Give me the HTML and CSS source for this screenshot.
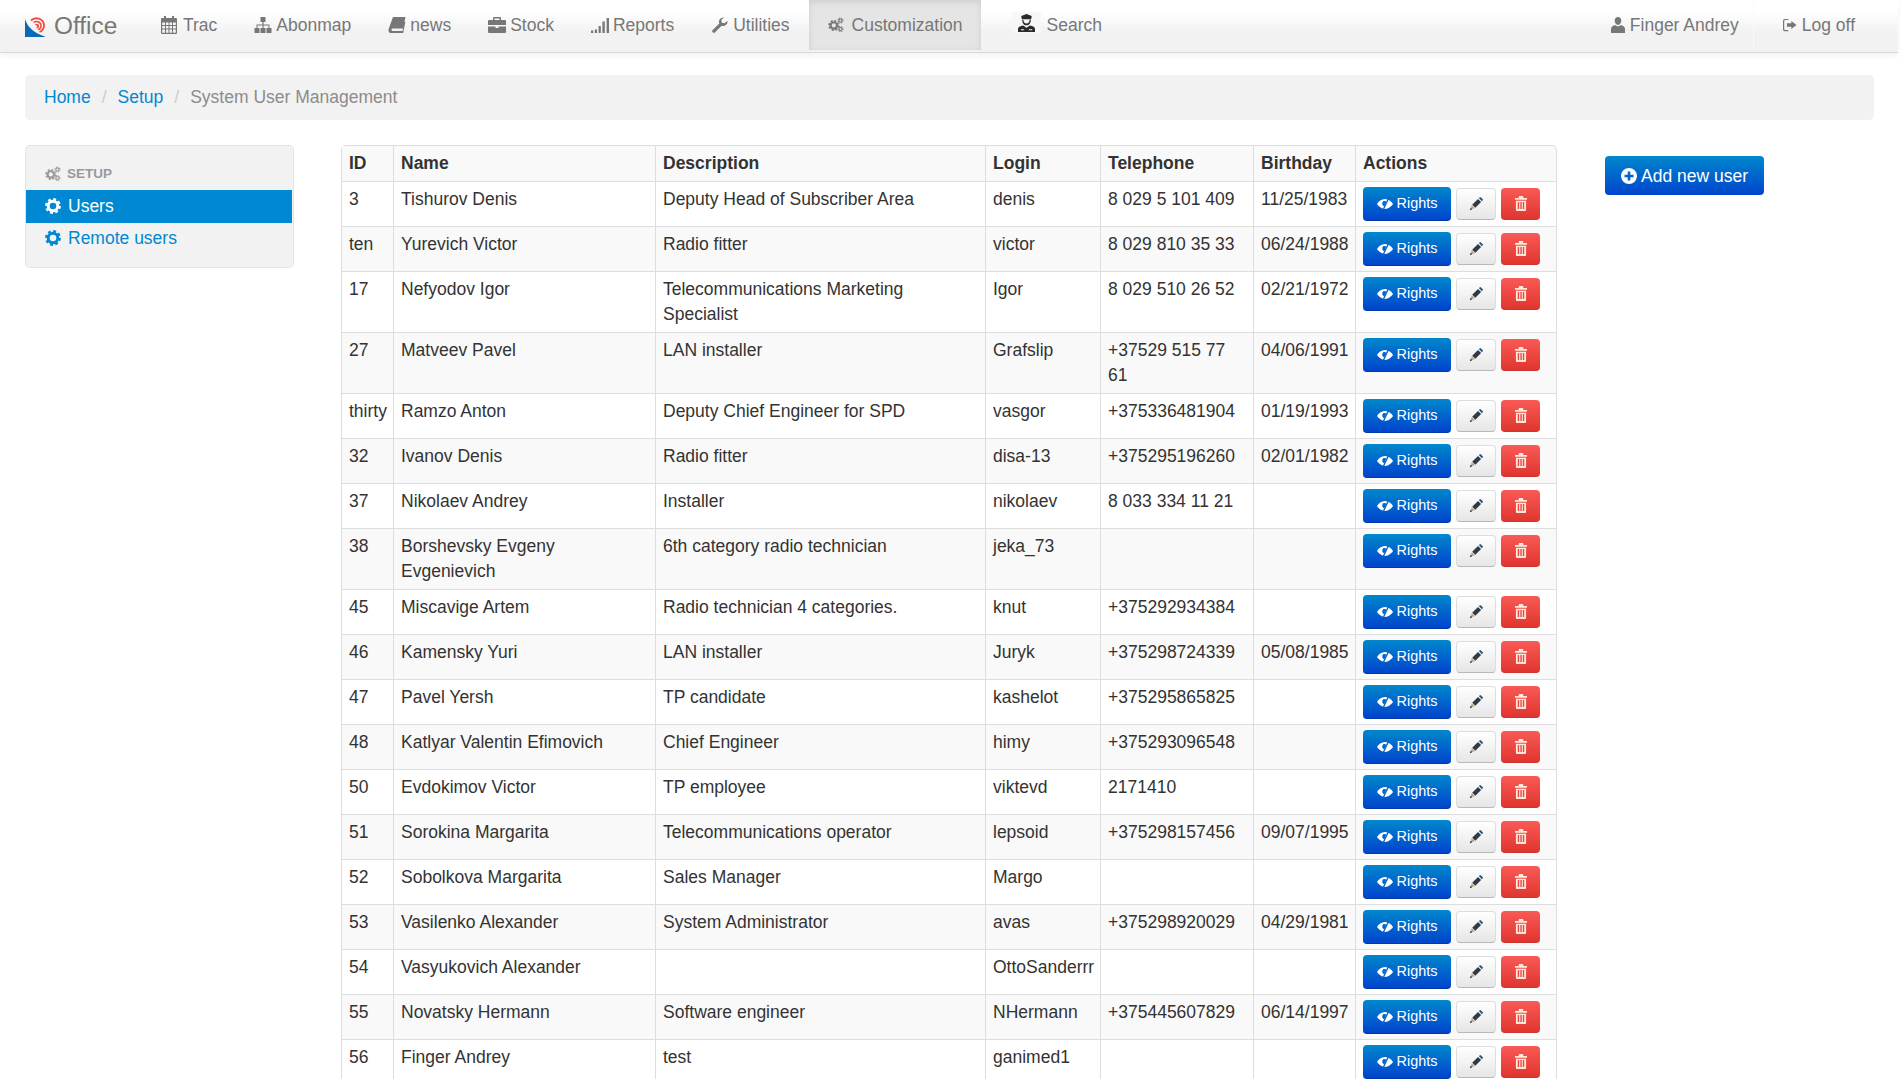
FILE: index.html
```html
<!DOCTYPE html>
<html lang="en">
<head>
  <meta charset="UTF-8">
  <title>System User Management</title>
  <link rel="stylesheet" href="styles.css">
</head>
<body>
  <!-- icon sprite -->
  <svg class="sprite" xmlns="http://www.w3.org/2000/svg">
    <symbol id="i-cog" viewBox="0 0 16 16">
      <circle cx="8" cy="8" r="4.8" fill="none" stroke="currentColor" stroke-width="3"/>
      <circle cx="8" cy="8" r="6.8" fill="none" stroke="currentColor" stroke-width="2.2" stroke-dasharray="2.9 2.44"/>
    </symbol>
    <symbol id="i-cogs" viewBox="0 0 18 18">
      <g fill="none" stroke="currentColor">
        <circle cx="6.5" cy="9.5" r="3.6" stroke-width="2.4"/>
        <circle cx="6.5" cy="9.5" r="5.3" stroke-width="1.8" stroke-dasharray="2.2 1.96"/>
        <circle cx="14" cy="4" r="1.7" stroke-width="1.2"/>
        <circle cx="14" cy="4" r="2.8" stroke-width="1.2" stroke-dasharray="1.2 1"/>
        <circle cx="14" cy="13.5" r="1.7" stroke-width="1.2"/>
        <circle cx="14" cy="13.5" r="2.8" stroke-width="1.2" stroke-dasharray="1.2 1"/>
      </g>
    </symbol>
    <symbol id="i-calendar" viewBox="0 0 16 18">
      <path fill="currentColor" fill-rule="evenodd" d="M3 0h2v2h6V0h2v2h2a1 1 0 0 1 1 1v14a1 1 0 0 1-1 1H1a1 1 0 0 1-1-1V3a1 1 0 0 1 1-1h2zM1.200 6.500V9h2.800V6.500zM5 6.500V9h2.500V6.500zM8.500 6.500V9H11V6.500zM12 6.500V9h2.800V6.500zM1.200 10V12.500h2.800V10zM5 10V12.500h2.500V10zM8.500 10V12.500H11V10zM12 10V12.500h2.800V10zM1.200 13.500V16.800h2.800V13.500zM5 13.500V16.800h2.500V13.500zM8.500 13.500V16.800H11V13.500zM12 13.500V16.800h2.800V13.500z"/>
    </symbol>
    <symbol id="i-sitemap" viewBox="0 0 18 16">
      <path fill="currentColor" d="M6.500 0h5v5H9.600v2.500H15.500V11H17.500v5h-5v-5h2V8.500H9.600V11H11.500v5h-5v-5h2V8.500H3.500V11h2v5H.5v-5h2V7.500h5.900V5H6.500z"/>
    </symbol>
    <symbol id="i-book" viewBox="0 0 18 16">
      <path fill="currentColor" d="M5 0h12.500L15 11.500H4.500C3 11.500 3 14 4.500 14H14.500l2-9.500.8.500L15.200 16H3C.5 16 .2 13.500.8 11.500z"/>
    </symbol>
    <symbol id="i-briefcase" viewBox="0 0 18 16">
      <path fill="currentColor" fill-rule="evenodd" d="M6 0h6a1 1 0 0 1 1 1v2h4a1 1 0 0 1 1 1v4H0V4a1 1 0 0 1 1-1h4V1a1 1 0 0 1 1-1zM6.500 1.500V3h5V1.500zM0 9.500h7.500V11h3V9.500H18V15a1 1 0 0 1-1 1H1a1 1 0 0 1-1-1z"/>
    </symbol>
    <symbol id="i-signal" viewBox="0 0 18 16">
      <path fill="currentColor" d="M0 13.500h2.200V16H0zM3.800 12.500H6V16H3.800zM7.600 9h2.200v7H7.600zM11.400 4.500h2.400V16h-2.400zM15.600 1H18v15h-2.400z"/>
    </symbol>
    <symbol id="i-wrench" viewBox="0 0 18 18">
      <path fill="currentColor" d="M17.500 4.500a5 5 0 0 1-6.700 5.300L3.500 17.200a1.900 1.900 0 0 1-2.700-2.700L8.200 7.200A5 5 0 0 1 13.500.5L10.500 3.500l.5 3 3 .5z"/>
    </symbol>
    <symbol id="i-user" viewBox="0 0 14 16">
      <path fill="currentColor" d="M7 0c2 0 3.300 1.500 3.300 3.800 0 2-1.200 4.200-3.300 4.200S3.700 5.800 3.700 3.800C3.700 1.500 5 0 7 0zM4.200 8c.8.800 1.700 1.200 2.800 1.200S9 8.800 9.800 8C12.500 8.800 14 10 14 12v4H0v-4c0-2 1.500-3.200 4.200-4z"/>
    </symbol>
    <symbol id="i-logoff" viewBox="0 0 16 14">
      <path fill="currentColor" fill-rule="evenodd" d="M2 0h4v1.400H2.500A1.100 1.100 0 0 0 1.400 2.500v9c0 .6.500 1.100 1.100 1.100H6V14H2a2 2 0 0 1-2-2V2a2 2 0 0 1 2-2zM9.500 2.500 15.500 7l-6 4.500V9H4.500V5h5z"/>
    </symbol>
    <symbol id="i-eye" viewBox="0 0 18 14">
      <path fill="currentColor" fill-rule="evenodd" d="M9 1.500c4 0 7.200 2.800 9 5.500-1.800 2.700-5 5.500-9 5.500S1.800 9.700 0 7C1.800 4.300 5 1.500 9 1.500zM7 4a3.300 3.300 0 0 0-1 3.200c.3 1 1 2 2.300 2.300L10.500 4.300C9.500 3.700 8 3.500 7 4z"/>
      <path fill="none" stroke="#0a66cc" stroke-width="1.600" d="M13 .5 7 13.500"/>
    </symbol>
    <symbol id="i-pencil" viewBox="0 0 14 14">
      <path fill="#2f3a45" d="M3.200 7.700 9 1.900l3.100 3.100-5.800 5.800z"/>
      <path fill="#245a86" d="M9.800 1.100 10.600.4a1 1 0 0 1 1.400 0l1.600 1.600a1 1 0 0 1 0 1.400l-.8.800z"/>
      <path fill="#b9a27a" d="M2.700 8.200 5.800 11.300 1.800 12.200z"/>
      <path fill="#222" d="M1.800 10.800 3.200 12.200.8 13.200z"/>
    </symbol>
    <symbol id="i-trash" viewBox="0 0 13 16">
      <path fill="currentColor" fill-rule="evenodd" d="M5 0h3a1 1 0 0 1 1 1v1h4v2H0V2h4V1a1 1 0 0 1 1-1zM1 5h11v10a1 1 0 0 1-1 1H2a1 1 0 0 1-1-1zM3 6.500V14h1.500V6.500zM5.800 6.500V14h1.500V6.500zM8.500 6.500V14H10V6.500z"/>
    </symbol>
    <symbol id="i-plus" viewBox="0 0 16 16">
      <path fill="currentColor" fill-rule="evenodd" d="M8 0a8 8 0 1 1 0 16A8 8 0 0 1 8 0zM6.700 3.500v3.200H3.500v2.600h3.200v3.200h2.600V9.300h3.200V6.700H9.300V3.500z"/>
    </symbol>
  </svg>

  <nav class="navbar">
    <a class="brand">
      <svg class="logo" viewBox="0 0 20 20">
        <path fill="#0a68b4" d="M0 2C2 9 8 16 20 19.500V20H0z"/>
        <g fill="none" stroke="#ee4d43">
          <path stroke-width="1.800" d="M6 3.500C10 -.5 18 1 19 7.500 19.500 11 17 14 14.500 15"/>
          <path stroke-width="1.600" d="M8.500 5.500C11 3.500 15.500 4.500 16 8 16.300 10.500 15 12 13 12.500"/>
          <path stroke-width="1.800" d="M10.500 8C12 7 13.500 8 13.300 9.300 13 10.300 12 10.500 11.500 10.300"/>
        </g>
      </svg>
      Office
    </a>
    <ul class="nav-list">
      <li class="trac"><svg class="ic w16"><use href="#i-calendar"/></svg>Trac</li>
      <li><svg class="ic w18"><use href="#i-sitemap"/></svg>Abonmap</li>
      <li><svg class="ic w18"><use href="#i-book"/></svg>news</li>
      <li><svg class="ic w18"><use href="#i-briefcase"/></svg>Stock</li>
      <li><svg class="ic w18"><use href="#i-signal"/></svg>Reports</li>
      <li><svg class="ic w18"><use href="#i-wrench"/></svg>Utilities</li>
      <li class="active"><svg class="ic w18"><use href="#i-cogs"/></svg>Customization</li>
      <li class="search">
        <span class="officer">
          <svg viewBox="0 0 18 19" preserveAspectRatio="none">
            <path fill="#2a2a2a" d="M3.500 2 9 0l5.500 2L14 5.500H4z"/>
            <path fill="#2a2a2a" d="M4.500 6h1.200c0 2.500 1.300 4 3.300 4s3.300-1.500 3.300-4h1.200c.2 3.500-1.700 6-4.500 6S4.300 9.500 4.500 6z"/>
            <path fill="#2a2a2a" d="M0 19v-3c0-2 2-3.200 5.500-3.800L9 14.500l3.500-2.300C16 12.800 18 14 18 16v3z"/>
            <path fill="#eee" d="M3 16h3.500v1.200H3zM11.500 16H15v1.200h-3.500z"/>
          </svg>
        </span>
        Search
      </li>
    </ul>
    <ul class="nav-list nav-right">
      <li class="divided"><svg class="ic w14"><use href="#i-user"/></svg>Finger Andrey</li>
      <li class="logoff"><svg class="ic w14"><use href="#i-logoff"/></svg>Log off</li>
    </ul>
  </nav>

  <div class="breadcrumb">
    <a href="#">Home</a><span class="sep">/</span><a href="#">Setup</a><span class="sep">/</span><span class="current">System User Management</span>
  </div>

  <div class="main">
    <aside class="sidebar">
      <div class="side-title"><svg class="ic w16"><use href="#i-cogs"/></svg>SETUP</div>
      <a class="side-link selected"><svg class="ic w16"><use href="#i-cog"/></svg>Users</a>
      <a class="side-link"><svg class="ic w16"><use href="#i-cog"/></svg>Remote users</a>
    </aside>

    <table class="users">
      <colgroup>
        <col class="c-id"><col class="c-name"><col class="c-desc"><col class="c-login"><col class="c-tel"><col class="c-birth"><col class="c-act">
      </colgroup>
      <thead>
        <tr><th>ID</th><th>Name</th><th>Description</th><th>Login</th><th>Telephone</th><th>Birthday</th><th>Actions</th></tr>
      </thead>
      <tbody>
        <tr><td>3</td><td>Tishurov Denis</td><td>Deputy Head of Subscriber Area</td><td>denis</td><td>8 029 5 101 409</td><td>11/25/1983</td><td class="act"><div class="btns"><a class="btn rights"><svg class="ic"><use href="#i-eye"/></svg>Rights</a><a class="btn edit"><svg class="ic"><use href="#i-pencil"/></svg></a><a class="btn del"><svg class="ic"><use href="#i-trash"/></svg></a></div></td></tr>
        <tr><td>ten</td><td>Yurevich Victor</td><td>Radio fitter</td><td>victor</td><td>8 029 810 35 33</td><td>06/24/1988</td><td class="act"><div class="btns"><a class="btn rights"><svg class="ic"><use href="#i-eye"/></svg>Rights</a><a class="btn edit"><svg class="ic"><use href="#i-pencil"/></svg></a><a class="btn del"><svg class="ic"><use href="#i-trash"/></svg></a></div></td></tr>
        <tr><td>17</td><td>Nefyodov Igor</td><td>Telecommunications Marketing Specialist</td><td>Igor</td><td>8 029 510 26 52</td><td>02/21/1972</td><td class="act"><div class="btns"><a class="btn rights"><svg class="ic"><use href="#i-eye"/></svg>Rights</a><a class="btn edit"><svg class="ic"><use href="#i-pencil"/></svg></a><a class="btn del"><svg class="ic"><use href="#i-trash"/></svg></a></div></td></tr>
        <tr><td>27</td><td>Matveev Pavel</td><td>LAN installer</td><td>Grafslip</td><td>+37529 515 77 61</td><td>04/06/1991</td><td class="act"><div class="btns"><a class="btn rights"><svg class="ic"><use href="#i-eye"/></svg>Rights</a><a class="btn edit"><svg class="ic"><use href="#i-pencil"/></svg></a><a class="btn del"><svg class="ic"><use href="#i-trash"/></svg></a></div></td></tr>
        <tr><td>thirty</td><td>Ramzo Anton</td><td>Deputy Chief Engineer for SPD</td><td>vasgor</td><td>+375336481904</td><td>01/19/1993</td><td class="act"><div class="btns"><a class="btn rights"><svg class="ic"><use href="#i-eye"/></svg>Rights</a><a class="btn edit"><svg class="ic"><use href="#i-pencil"/></svg></a><a class="btn del"><svg class="ic"><use href="#i-trash"/></svg></a></div></td></tr>
        <tr><td>32</td><td>Ivanov Denis</td><td>Radio fitter</td><td>disa-13</td><td>+375295196260</td><td>02/01/1982</td><td class="act"><div class="btns"><a class="btn rights"><svg class="ic"><use href="#i-eye"/></svg>Rights</a><a class="btn edit"><svg class="ic"><use href="#i-pencil"/></svg></a><a class="btn del"><svg class="ic"><use href="#i-trash"/></svg></a></div></td></tr>
        <tr><td>37</td><td>Nikolaev Andrey</td><td>Installer</td><td>nikolaev</td><td>8 033 334 11 21</td><td></td><td class="act"><div class="btns"><a class="btn rights"><svg class="ic"><use href="#i-eye"/></svg>Rights</a><a class="btn edit"><svg class="ic"><use href="#i-pencil"/></svg></a><a class="btn del"><svg class="ic"><use href="#i-trash"/></svg></a></div></td></tr>
        <tr><td>38</td><td>Borshevsky Evgeny Evgenievich</td><td>6th category radio technician</td><td>jeka_73</td><td></td><td></td><td class="act"><div class="btns"><a class="btn rights"><svg class="ic"><use href="#i-eye"/></svg>Rights</a><a class="btn edit"><svg class="ic"><use href="#i-pencil"/></svg></a><a class="btn del"><svg class="ic"><use href="#i-trash"/></svg></a></div></td></tr>
        <tr><td>45</td><td>Miscavige Artem</td><td>Radio technician 4 categories.</td><td>knut</td><td>+375292934384</td><td></td><td class="act"><div class="btns"><a class="btn rights"><svg class="ic"><use href="#i-eye"/></svg>Rights</a><a class="btn edit"><svg class="ic"><use href="#i-pencil"/></svg></a><a class="btn del"><svg class="ic"><use href="#i-trash"/></svg></a></div></td></tr>
        <tr><td>46</td><td>Kamensky Yuri</td><td>LAN installer</td><td>Juryk</td><td>+375298724339</td><td>05/08/1985</td><td class="act"><div class="btns"><a class="btn rights"><svg class="ic"><use href="#i-eye"/></svg>Rights</a><a class="btn edit"><svg class="ic"><use href="#i-pencil"/></svg></a><a class="btn del"><svg class="ic"><use href="#i-trash"/></svg></a></div></td></tr>
        <tr><td>47</td><td>Pavel Yersh</td><td>TP candidate</td><td>kashelot</td><td>+375295865825</td><td></td><td class="act"><div class="btns"><a class="btn rights"><svg class="ic"><use href="#i-eye"/></svg>Rights</a><a class="btn edit"><svg class="ic"><use href="#i-pencil"/></svg></a><a class="btn del"><svg class="ic"><use href="#i-trash"/></svg></a></div></td></tr>
        <tr><td>48</td><td>Katlyar Valentin Efimovich</td><td>Chief Engineer</td><td>himy</td><td>+375293096548</td><td></td><td class="act"><div class="btns"><a class="btn rights"><svg class="ic"><use href="#i-eye"/></svg>Rights</a><a class="btn edit"><svg class="ic"><use href="#i-pencil"/></svg></a><a class="btn del"><svg class="ic"><use href="#i-trash"/></svg></a></div></td></tr>
        <tr><td>50</td><td>Evdokimov Victor</td><td>TP employee</td><td>viktevd</td><td>2171410</td><td></td><td class="act"><div class="btns"><a class="btn rights"><svg class="ic"><use href="#i-eye"/></svg>Rights</a><a class="btn edit"><svg class="ic"><use href="#i-pencil"/></svg></a><a class="btn del"><svg class="ic"><use href="#i-trash"/></svg></a></div></td></tr>
        <tr><td>51</td><td>Sorokina Margarita</td><td>Telecommunications operator</td><td>lepsoid</td><td>+375298157456</td><td>09/07/1995</td><td class="act"><div class="btns"><a class="btn rights"><svg class="ic"><use href="#i-eye"/></svg>Rights</a><a class="btn edit"><svg class="ic"><use href="#i-pencil"/></svg></a><a class="btn del"><svg class="ic"><use href="#i-trash"/></svg></a></div></td></tr>
        <tr><td>52</td><td>Sobolkova Margarita</td><td>Sales Manager</td><td>Margo</td><td></td><td></td><td class="act"><div class="btns"><a class="btn rights"><svg class="ic"><use href="#i-eye"/></svg>Rights</a><a class="btn edit"><svg class="ic"><use href="#i-pencil"/></svg></a><a class="btn del"><svg class="ic"><use href="#i-trash"/></svg></a></div></td></tr>
        <tr><td>53</td><td>Vasilenko Alexander</td><td>System Administrator</td><td>avas</td><td>+375298920029</td><td>04/29/1981</td><td class="act"><div class="btns"><a class="btn rights"><svg class="ic"><use href="#i-eye"/></svg>Rights</a><a class="btn edit"><svg class="ic"><use href="#i-pencil"/></svg></a><a class="btn del"><svg class="ic"><use href="#i-trash"/></svg></a></div></td></tr>
        <tr><td>54</td><td>Vasyukovich Alexander</td><td></td><td>OttoSanderrr</td><td></td><td></td><td class="act"><div class="btns"><a class="btn rights"><svg class="ic"><use href="#i-eye"/></svg>Rights</a><a class="btn edit"><svg class="ic"><use href="#i-pencil"/></svg></a><a class="btn del"><svg class="ic"><use href="#i-trash"/></svg></a></div></td></tr>
        <tr><td>55</td><td>Novatsky Hermann</td><td>Software engineer</td><td>NHermann</td><td>+375445607829</td><td>06/14/1997</td><td class="act"><div class="btns"><a class="btn rights"><svg class="ic"><use href="#i-eye"/></svg>Rights</a><a class="btn edit"><svg class="ic"><use href="#i-pencil"/></svg></a><a class="btn del"><svg class="ic"><use href="#i-trash"/></svg></a></div></td></tr>
        <tr><td>56</td><td>Finger Andrey</td><td>test</td><td>ganimed1</td><td></td><td></td><td class="act"><div class="btns"><a class="btn rights"><svg class="ic"><use href="#i-eye"/></svg>Rights</a><a class="btn edit"><svg class="ic"><use href="#i-pencil"/></svg></a><a class="btn del"><svg class="ic"><use href="#i-trash"/></svg></a></div></td></tr>
      </tbody>
    </table>

    <a class="add-user"><svg class="ic"><use href="#i-plus"/></svg>Add new user</a>
  </div>
</body>
</html>
```

FILE: styles.css
```css
html, body {
  height: 100%;
  overflow: hidden;
}
body {
  margin: 0;
  font-family: "Liberation Sans", Arial, sans-serif;
  font-size: 17.5px;
  line-height: 24px;
  color: #333;
  background-color: #fff;
}
a {
  color: #0088d2;
  text-decoration: none;
}
ul {
  list-style: none;
  margin: 0;
  padding: 0;
}
.sprite {
  display: none;
}
.ic {
  flex: none;
  height: 16px;
  width: 16px;
}
.w14 { width: 14px; }
.w16 { width: 16px; }
.w18 { width: 18px; }

/* top bar */
.navbar {
  display: flex;
  height: 52px;
  margin-right: 3px;
  padding-left: 25px;
  color: #777;
  background: linear-gradient(#fff 12px, #f2f2f2 32px);
  border-bottom: 1px solid #d8d8d8;
  box-shadow: 0 3px 6px rgba(0, 0, 0, 0.05);
}
.brand {
  display: flex;
  align-items: center;
  gap: 9px;
  width: 118px;
  padding-bottom: 1px;
  color: #777;
  font-size: 24.4px;
}
.logo {
  width: 20px;
  height: 20px;
  margin-top: 3px;
}
.nav-list {
  display: flex;
  gap: 1px;
  height: 50px;
}
.nav-list li {
  box-sizing: border-box;
  display: flex;
  align-items: center;
  gap: 4px;
  padding: 0 18px 1px;
}
.nav-list li.trac {
  gap: 6px;
}
.nav-list li.trac .ic {
  height: 18px;
}
.nav-list li.active {
  gap: 7px;
  background-color: #e5e5e5;
  box-shadow: inset 0 2px 6px rgba(0, 0, 0, 0.1);
}
.nav-list li.search {
  gap: 6px;
  margin-left: 12px;
}
.officer {
  display: flex;
  align-items: center;
  justify-content: center;
  width: 29px;
  height: 21px;
  margin-top: -4px;
  background-color: #f7f7f7;
}
.officer svg {
  width: 17px;
  height: 18px;
}
.nav-right {
  margin-left: auto;
}
.nav-right li {
  gap: 5px;
}
.nav-right li.divided {
  padding-right: 14px;
  border-right: 1px solid #fafafa;
}
.nav-right li.logoff {
  padding: 0 43px 1px 28px;
}

/* breadcrumb */
.breadcrumb {
  display: flex;
  align-items: center;
  box-sizing: border-box;
  height: 45px;
  margin: 22px 27px 25px 25px;
  padding: 0 19px 2px;
  background-color: #f2f2f2;
  border-radius: 5px;
}
.breadcrumb .sep {
  padding: 0 11px;
  color: #ccc;
}
.breadcrumb .current {
  color: #8c8c8c;
}

/* layout */
.main {
  display: flex;
  align-items: flex-start;
  padding-left: 25px;
}

/* left menu */
.sidebar {
  box-sizing: border-box;
  width: 269px;
  height: 123px;
  margin-right: 47px;
  padding-top: 13px;
  background-color: #f2f2f2;
  border: 1px dotted #d5d5d5;
  border-radius: 5px;
}
.side-title {
  display: flex;
  align-items: center;
  gap: 6px;
  height: 31px;
  padding: 0 0 2px 19px;
  box-sizing: border-box;
  color: #999;
  font-size: 13.5px;
  font-weight: bold;
}
.side-link {
  display: flex;
  align-items: center;
  gap: 7px;
  height: 33px;
  margin-right: 1px;
  padding: 0 0 4px 19px;
  box-sizing: border-box;
}
.side-link.selected {
  padding-bottom: 2px;
  color: #fff;
  background-color: #0088d2;
}

/* users table */
.users {
  width: 1216px;
  table-layout: fixed;
  border-collapse: separate;
  border-spacing: 0;
  border-top: 1px solid #ddd;
  border-left: 1px solid #ddd;
  border-top-left-radius: 5px;
  border-top-right-radius: 5px;
}
.c-id { width: 52px; }
.c-name { width: 262px; }
.c-desc { width: 330px; }
.c-login { width: 115px; }
.c-tel { width: 153px; }
.c-birth { width: 102px; }
.c-act { width: 201px; }
.users th, .users td {
  vertical-align: top;
  text-align: left;
  border-right: 1px solid #ddd;
  border-bottom: 1px solid #ddd;
}
.users th {
  padding: 5px 7px 6px;
  background-color: #f9f9f9;
}
.users th:last-child {
  border-top-right-radius: 5px;
}
.users td {
  padding: 5px 6px 6px 7px;
  line-height: 24.5px;
}
.users td.act {
  padding: 5px 5px 5px 7px;
}
.users tbody tr:nth-child(even) td {
  background-color: #f9f9f9;
}
.btns {
  display: flex;
  align-items: center;
  gap: 5px;
  height: 34px;
}
.btn {
  box-sizing: border-box;
  display: flex;
  align-items: center;
  justify-content: center;
  height: 32px;
  border-radius: 4px;
  font-size: 14.4px;
}
.btn.rights {
  gap: 4px;
  width: 88px;
  height: 34px;
  color: #fff;
  background: linear-gradient(#0088cc, #0044cc);
  border-bottom: 1px solid #0039ab;
}
.btn.edit {
  width: 40px;
  background: linear-gradient(#fff, #e6e6e6);
  border: 1px solid #ddd;
  border-bottom-color: #b8b8b8;
}
.btn.edit .ic {
  width: 14px;
  height: 14px;
}
.btn.del {
  width: 39px;
  color: #ffe9dc;
  background: linear-gradient(#f95a56, #e0352f);
  border-bottom: 1px solid #cf3530;
}
.btn.del .ic {
  width: 12px;
  height: 15px;
}

.add-user {
  display: flex;
  align-items: center;
  gap: 4px;
  box-sizing: border-box;
  width: 159px;
  height: 39px;
  margin: 11px 0 0 48px;
  padding-left: 16px;
  color: #fff;
  background: linear-gradient(#0088cc, #0044cc);
  border-radius: 4px;
}
```
